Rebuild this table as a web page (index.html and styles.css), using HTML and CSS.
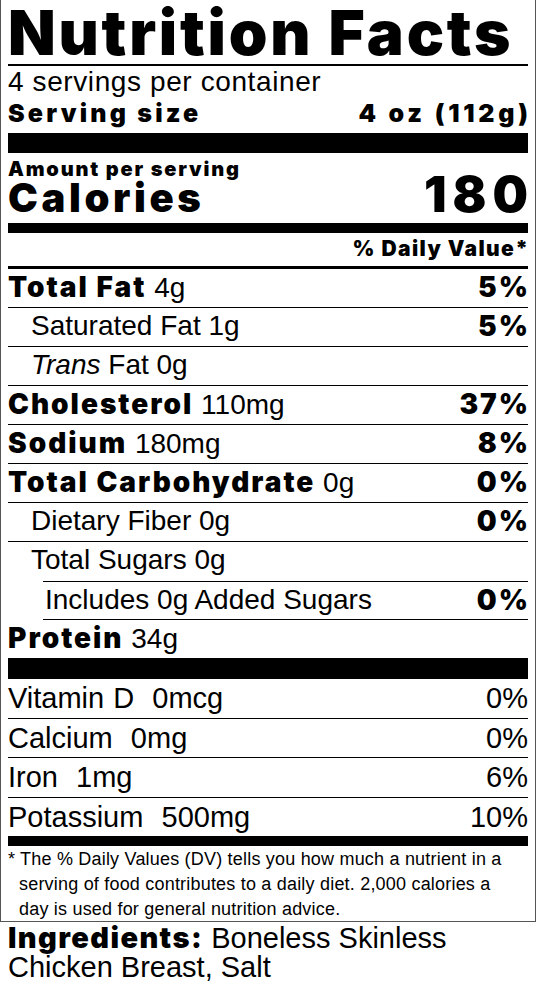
FILE: index.html
```html
<!DOCTYPE html>
<html lang="en">
<head>
    <meta charset="UTF-8">
    <meta name="viewport" content="width=device-width, initial-scale=1.0">
    <title>Nutrition Facts</title>
    <link rel="stylesheet" href="styles.css">
</head>
<body>
    <div class="label">
        <h1 class="title">Nutrition Facts</h1>

        <div class="servings">
            <div class="per-container">4 servings per container</div>
            <div class="serving-size">
                <span>Serving size</span>
                <span class="tight">4 oz (112g)</span>
            </div>
        </div>

        <div class="calories">
            <div class="amount">Amount per serving</div>
            <div class="cal-row">
                <span class="cal-label">Calories</span>
                <span class="cal-num">180</span>
            </div>
        </div>

        <div class="dv-head"><span>% Daily Value*</span></div>

        <ul class="nutrients">
            <li class="row"><span><b>Total Fat</b> 4g</span><b class="dv">5%</b></li>
            <li class="row indent"><span>Saturated Fat 1g</span><b class="dv">5%</b></li>
            <li class="row indent"><span><i>Trans</i> Fat 0g</span></li>
            <li class="row"><span><b>Cholesterol</b> 110mg</span><b class="dv">37%</b></li>
            <li class="row"><span><b>Sodium</b> 180mg</span><b class="dv">8%</b></li>
            <li class="row"><span><b>Total Carbohydrate</b> 0g</span><b class="dv">0%</b></li>
            <li class="row indent"><span>Dietary Fiber 0g</span><b class="dv">0%</b></li>
            <li class="row indent sugars"><span>Total Sugars 0g</span></li>
            <li class="row added"><span>Includes 0g Added Sugars</span><b class="dv">0%</b></li>
            <li class="row protein"><span><b>Protein</b> 34g</span></li>
        </ul>

        <ul class="vitamins">
            <li class="row"><span>Vitamin D&nbsp; 0mcg</span><span>0%</span></li>
            <li class="row"><span>Calcium&nbsp; 0mg</span><span>0%</span></li>
            <li class="row"><span>Iron&nbsp; 1mg</span><span>6%</span></li>
            <li class="row last"><span>Potassium&nbsp; 500mg</span><span>10%</span></li>
        </ul>

        <p class="footnote">* The % Daily Values (DV) tells you how much a nutrient in a<br>serving of food contributes to a daily diet. 2,000 calories a<br>day is used for general nutrition advice.</p>
    </div>

    <p class="ingredients"><b>Ingredients:</b> Boneless Skinless<br>Chicken Breast, Salt</p>
</body>
</html>
```

FILE: styles.css
```css
body {
    margin: 0;
    background: #fff;
    color: #000;
    font-family: 'Liberation Sans', Arial, sans-serif;
}

b,
.title,
.serving-size,
.amount,
.cal-row,
.dv-head {
    font-family: Inter, Roboto, 'Liberation Sans', sans-serif;
    font-weight: 900;
}

.label {
    width: 520px;
    padding: 0 7px;
    border: 1px solid #555;
    border-top: none;
}

.title {
    margin: 0;
    height: 64px;
    font-size: 62px;
    line-height: 66px;
    letter-spacing: 2.8px;
    white-space: nowrap;
    border-bottom: 2px solid #000;
}

.servings {
    height: 67px;
    border-bottom: 20px solid #000;
}

.per-container {
    font-size: 28px;
    line-height: 31px;
    letter-spacing: 0.6px;
}

.serving-size {
    display: flex;
    justify-content: space-between;
    font-size: 25px;
    line-height: 32px;
    letter-spacing: 3.2px;
}

.serving-size .tight {
    letter-spacing: 3.8px;
    margin-right: -3.8px;
}

.calories {
    height: 70px;
    border-bottom: 10px solid #000;
}

.amount {
    padding-top: 4px;
    font-size: 20px;
    line-height: 24px;
    letter-spacing: 1.8px;
}

.cal-row {
    display: flex;
    justify-content: space-between;
    align-items: baseline;
    line-height: 26px;
}

.cal-label {
    font-size: 40px;
    letter-spacing: 3.6px;
}

.cal-num {
    font-size: 50px;
    letter-spacing: 6px;
    margin-right: -6px;
}

.dv-head {
    height: 33px;
    text-align: right;
    font-size: 21px;
    line-height: 32px;
    border-bottom: 3px solid #000;
}

.dv-head span {
    letter-spacing: 1.4px;
    margin-right: -1.4px;
}

.nutrients,
.vitamins {
    list-style: none;
    margin: 0;
    padding: 0;
}

.row {
    display: flex;
    justify-content: space-between;
    height: 38px;
    font-size: 28px;
    line-height: 36px;
    border-bottom: 1px solid #000;
}

.row b {
    letter-spacing: 2px;
}

.row .dv {
    margin-right: -2px;
}

.indent {
    padding-left: 23px;
}

.sugars {
    height: 39px;
    border-bottom: none;
}

.added {
    height: 37px;
    margin-left: 35px;
    padding-left: 2px;
    border-top: 1px solid #000;
}

.protein {
    border-bottom: 21px solid #000;
}

.vitamins .row {
    height: 38.5px;
    font-size: 29px;
    line-height: 38px;
    word-spacing: 1px;
}

.vitamins .last {
    border-bottom: 10px solid #000;
}

.footnote {
    margin: 0;
    padding: 1px 0 0 11px;
    height: 74px;
    text-indent: -11px;
    font-size: 18px;
    line-height: 25px;
    letter-spacing: 0.2px;
    white-space: nowrap;
}

.ingredients {
    margin: 0;
    padding: 1px 8px 0;
    font-size: 29px;
    line-height: 29px;
}

.ingredients b {
    letter-spacing: 1.4px;
}
```
